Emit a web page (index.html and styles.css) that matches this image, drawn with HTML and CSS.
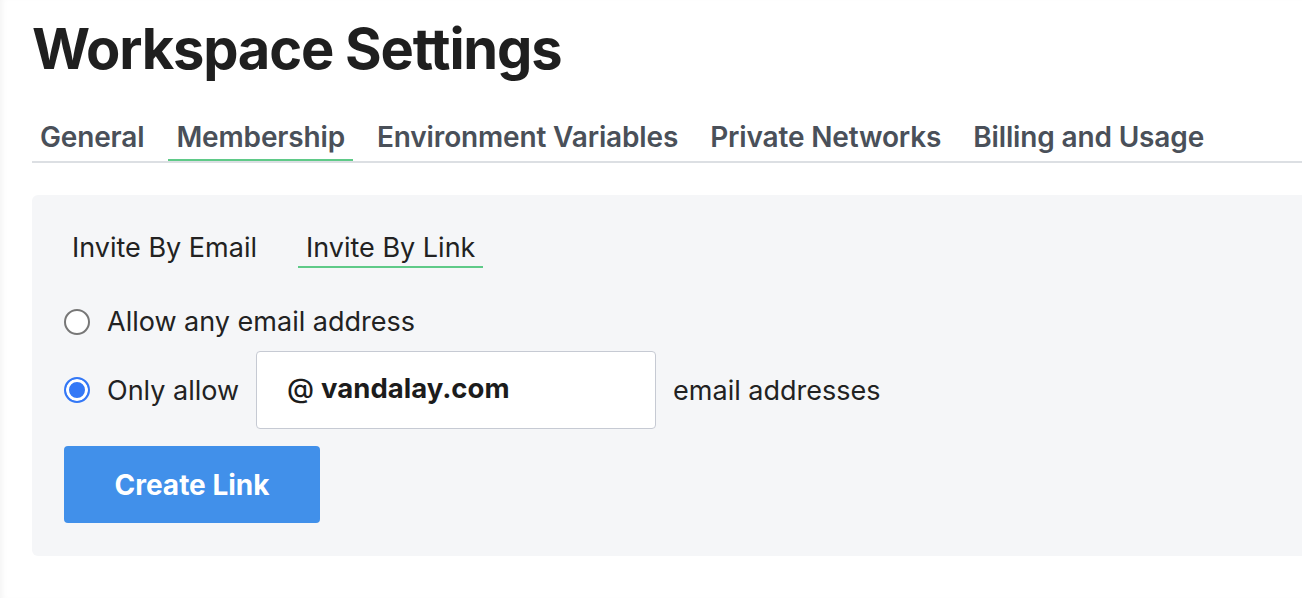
FILE: index.html
```html
<!DOCTYPE html>
<html lang="en">
<head>
  <meta charset="UTF-8">
  <meta name="viewport" content="width=device-width, initial-scale=1.0">
  <title>Workspace Settings</title>
  <link rel="stylesheet" href="styles.css">
</head>
<body>
  <div class="page">
    <h1 class="title">Workspace Settings</h1>

    <nav class="tabs">
      <span class="tab">General</span>
      <span class="tab active">Membership</span>
      <span class="tab">Environment Variables</span>
      <span class="tab">Private Networks</span>
      <span class="tab">Billing and Usage</span>
    </nav>

    <div class="panel">
      <div class="subtabs">
        <span class="subtab">Invite By Email</span>
        <span class="subtab active">Invite By Link</span>
      </div>

      <label class="option">
        <span class="radio"></span>
        <span>Allow any email address</span>
      </label>

      <label class="option">
        <span class="radio checked"></span>
        <span>Only allow</span>
        <span class="domain"><span class="at">@</span> vandalay.com</span>
        <span>email addresses</span>
      </label>

      <button class="create">Create Link</button>
    </div>
  </div>
</body>
</html>
```

FILE: styles.css
```css
body {
  margin: 0;
  background: #fff;
  font-family: Inter, "Noto Sans", sans-serif;
  color: #222;
}

.page {
  min-height: 100vh;
  padding-left: 32px;
  overflow: hidden;
  box-shadow: inset 6px 0 6px -4px rgba(0, 0, 0, 0.05);
}

.title {
  margin: 0;
  padding-top: 18px;
  font-size: 56px;
  font-weight: 700;
  line-height: 62px;
  letter-spacing: -1.2px;
  color: #1f1f1f;
}

/* top level tabs */
.tabs {
  display: flex;
  gap: 16px;
  margin-top: 40px;
  border-bottom: 2px solid #dcdfe3;
}

.tab {
  padding: 0 8px 5px;
  font-size: 28px;
  font-weight: 600;
  line-height: 34px;
  letter-spacing: -0.15px;
  color: #4a5059;
  border-bottom: 2px solid transparent;
}

.tab.active {
  border-bottom-color: #5fca88;
}

.panel {
  margin-top: 32px;
  padding: 36px 32px 33px;
  background: #f5f6f8;
  border-radius: 6px 0 0 6px;
}

.subtabs {
  display: flex;
  gap: 33px;
}

.subtab {
  padding: 0 8px 2px;
  font-size: 27px;
  line-height: 33px;
  border-bottom: 2px solid transparent;
}

.subtab.active {
  border-bottom-color: #5fca88;
}

.option {
  display: flex;
  align-items: center;
  gap: 17px;
  font-size: 27px;
  line-height: 33px;
  margin-top: 37px;
}

.option + .option {
  margin-top: 13px;
}

.radio {
  width: 22px;
  height: 22px;
  border: 2px solid #777;
  border-radius: 50%;
  background: #fff;
  flex: none;
}

.radio.checked {
  border-color: #3478f6;
  background: #3478f6;
  box-shadow: inset 0 0 0 3px #fff;
}

.domain {
  box-sizing: border-box;
  width: 400px;
  height: 78px;
  padding: 0 0 4px 30px;
  display: flex;
  align-items: center;
  background: #fff;
  border: 1px solid #c6cad3;
  border-radius: 4px;
  font-size: 27.5px;
  font-weight: 700;
  color: #1c1c1c;
}

.at {
  font-weight: 500;
  margin-right: 7px;
}

.create {
  display: block;
  margin-top: 17px;
  width: 256px;
  height: 77px;
  border: none;
  border-radius: 4px;
  background: #4190ea;
  color: #fff;
  font-family: inherit;
  font-size: 28px;
  font-weight: 700;
}
```
